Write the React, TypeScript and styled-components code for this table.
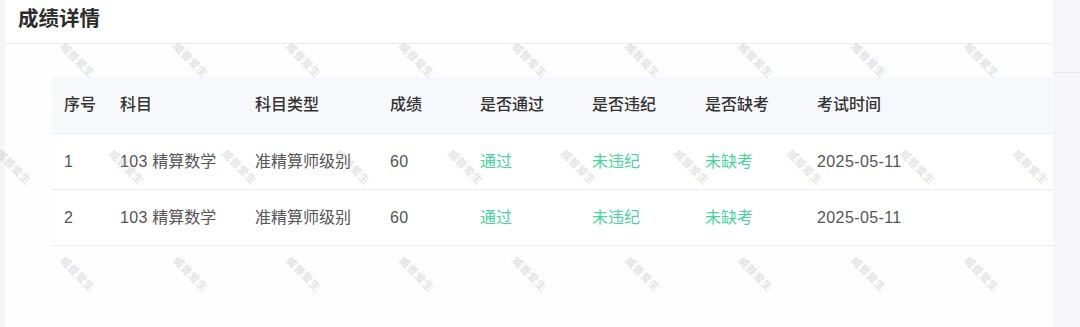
import React from 'react';
import styled, { createGlobalStyle } from 'styled-components';

type Record = {
  id: number;
  subject: string;
  level: string;
  score: number;
  passed: string;
  discipline: string;
  attendance: string;
  date: string;
};

const records: Record[] = [
  {
    id: 1,
    subject: '103 精算数学',
    level: '准精算师级别',
    score: 60,
    passed: '通过',
    discipline: '未违纪',
    attendance: '未缺考',
    date: '2025-05-11'
  },
  {
    id: 2,
    subject: '103 精算数学',
    level: '准精算师级别',
    score: 60,
    passed: '通过',
    discipline: '未违纪',
    attendance: '未缺考',
    date: '2025-05-11'
  }
];

const columns = [
  { title: '序号', width: 56 },
  { title: '科目', width: 135 },
  { title: '科目类型', width: 135 },
  { title: '成绩', width: 90 },
  { title: '是否通过', width: 112 },
  { title: '是否违纪', width: 113 },
  { title: '是否缺考', width: 112 },
  { title: '考试时间', width: 0 }
];

const watermarkRows = [
  { offset: 21, count: 10 },
  { offset: -43, count: 10 },
  { offset: 21, count: 10 }
];

const WATERMARK = '威普爱生';

const App: React.FC = () => {
  return (
    <>
      <GlobalStyle />
      <Page>
        <Card>
          <CardHeader>
            <Title>成绩详情</Title>
          </CardHeader>
          <CardBody>
            <Table>
              <colgroup>
                {columns.map((c) => (
                  <col key={c.title} style={c.width ? { width: c.width } : undefined} />
                ))}
              </colgroup>
              <thead>
                <tr>
                  {columns.map((c) => (
                    <HeadCell key={c.title}>{c.title}</HeadCell>
                  ))}
                </tr>
              </thead>
              <tbody>
                {records.map((r) => (
                  <tr key={r.id}>
                    <Cell $numeric>{r.id}</Cell>
                    <Cell>
                      <Num>{r.subject.split(' ')[0]}</Num> {r.subject.split(' ')[1]}
                    </Cell>
                    <Cell>{r.level}</Cell>
                    <Cell $numeric>{r.score}</Cell>
                    <Cell $status>{r.passed}</Cell>
                    <Cell $status>{r.discipline}</Cell>
                    <Cell $status>{r.attendance}</Cell>
                    <Cell $numeric>{r.date}</Cell>
                  </tr>
                ))}
              </tbody>
            </Table>
          </CardBody>
        </Card>
        <SidePanel>
          <SideTop />
        </SidePanel>
        <Watermarks>
          {watermarkRows.map((row, i) => (
            <WatermarkRow key={i} $offset={row.offset}>
              {Array.from({ length: row.count }).map((_, j) => (
                <WatermarkCell key={j}>
                  <WatermarkText>{WATERMARK}</WatermarkText>
                </WatermarkCell>
              ))}
            </WatermarkRow>
          ))}
        </Watermarks>
      </Page>
    </>
  );
};

const GlobalStyle = createGlobalStyle`
  html, body {
    margin: 0;
    padding: 0;
    background: #f5f5f7;
  }
  body {
    font-family: "Liberation Sans", "Noto Sans CJK SC", sans-serif;
    color: #333;
  }
  * {
    box-sizing: border-box;
  }
`;

const Page = styled.div`
  position: relative;
  display: flex;
  width: 1080px;
  height: 327px;
  padding-left: 5px;
  overflow: hidden;
  background: #f5f5f7;
`;

const Card = styled.section`
  width: 1048px;
  height: 100%;
  background: #fff;
  display: flex;
  flex-direction: column;
`;

const CardHeader = styled.header`
  height: 44px;
  padding: 0 0 6px 13px;
  border-bottom: 1px solid #ececef;
  display: flex;
  align-items: center;
`;

const Title = styled.h2`
  margin: 0;
  font-size: 20.5px;
  line-height: 38px;
  font-weight: 700;
  color: #2b2b2b;
`;

const CardBody = styled.div`
  flex: 1;
  padding: 33px 0 0 47px;
  background: #fefefe;
`;

const Table = styled.table`
  width: 100%;
  border-collapse: collapse;
  table-layout: fixed;
`;

const HeadCell = styled.th`
  height: 56px;
  padding: 0 12px;
  text-align: left;
  font-size: 16px;
  line-height: 22px;
  font-weight: 500;
  color: #333;
  background: #f7f8fc;
  border-bottom: 1px solid #eceef4;
  white-space: nowrap;
`;

const Cell = styled.td<{ $status?: boolean; $numeric?: boolean }>`
  height: 56px;
  padding: 2px 12px 0;
  font-size: 16px;
  line-height: 22px;
  letter-spacing: ${(p) => (p.$numeric ? '0.4px' : '0')};
  color: ${(p) => (p.$status ? '#48d49c' : '#555')};
  background: #fff;
  border-bottom: 1px solid #eceef4;
  white-space: nowrap;
`;

const Num = styled.span`
  letter-spacing: 0.4px;
`;

const SidePanel = styled.aside`
  flex: 1;
  background: #f6f6f8;
`;

const SideTop = styled.div`
  height: 73px;
  border-bottom: 1px solid #e6e6ea;
`;

const Watermarks = styled.div`
  position: absolute;
  top: 0;
  left: 0;
  width: 1053px;
  height: 100%;
  overflow: hidden;
  pointer-events: none;
  padding-top: 6px;
  display: flex;
  flex-direction: column;
`;

const WatermarkRow = styled.div<{ $offset: number }>`
  display: flex;
  height: 112px;
  margin-left: ${(p) => p.$offset}px;
`;

const WatermarkCell = styled.div`
  flex: 0 0 113px;
  display: flex;
  align-items: center;
  justify-content: center;
`;

const WatermarkText = styled.span`
  display: inline-block;
  transform: rotate(45deg);
  font-size: 10.5px;
  font-weight: 700;
  letter-spacing: 0.5px;
  color: rgba(160, 160, 165, 0.3);
  white-space: nowrap;
`;

export default App;
